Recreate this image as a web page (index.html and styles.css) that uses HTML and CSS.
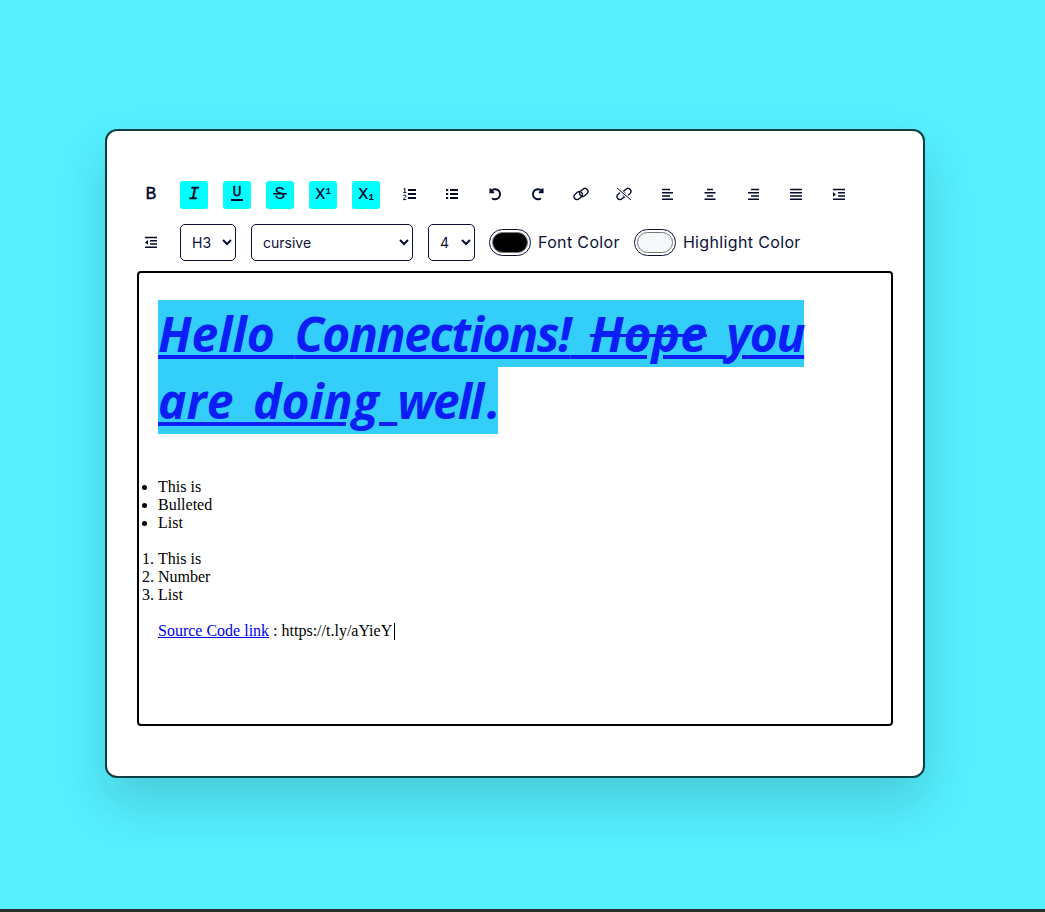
FILE: index.html
```html
<!DOCTYPE html>
<html lang="en">

<head>
  <meta charset="UTF-8" />
  <meta name="viewport" content="width=device-width, initial-scale=1.0" />
  <title>Rich Text Editor</title>
  <link rel="stylesheet" href="styles.css">
</head>

<body>
  <main class="page">
    <div class="container">
      <div class="options">
        <button class="option-button"><span class="glyph-b">B</span></button>
        <button class="option-button active"><span class="glyph-i">I</span></button>
        <button class="option-button active"><span class="glyph-u">U</span></button>
        <button class="option-button active"><span class="glyph-s">S</span></button>
        <button class="option-button active"><span class="glyph-x">X<sup>1</sup></span></button>
        <button class="option-button active"><span class="glyph-x">X<sub>1</sub></span></button>

        <button class="option-button">
          <svg class="icon" viewBox="0 0 14 14"><path class="line" d="M6 3H14M6 7H14M6 11H14" /><path class="thin" d="M1.6 2.2 2.8 1.4V5.6M1.4 5.6H4.2M1.4 8.8C1.8 7.6 4 7.8 4 9.1 4 10.3 1.5 11 1.4 12.6H4.3" /></svg>
        </button>
        <button class="option-button">
          <svg class="icon" viewBox="0 0 14 14"><path class="line" d="M5 3H13M5 7H13M5 11H13" /><path class="solid" d="M1 2H3.2V4H1ZM1 6H3.2V8H1ZM1 10H3.2V12H1Z" /></svg>
        </button>
        <button class="option-button">
          <svg class="icon" viewBox="0 0 14 14"><path class="heavy" d="M2.4 1.4V5.2H6.2M2.6 5A5 5 0 1 1 4 11.2" /></svg>
        </button>
        <button class="option-button">
          <svg class="icon" viewBox="0 0 14 14"><path class="heavy" d="M11.6 1.4V5.2H7.8M11.4 5A5 5 0 1 0 10 11.2" /></svg>
        </button>
        <button class="option-button">
          <svg class="icon wide" viewBox="0 0 16 14"><g class="chain"><rect x="0.7" y="5.6" width="9" height="6" rx="3" transform="rotate(-40 5.2 8.6)" /><rect x="6.3" y="2.400" width="9" height="6" rx="3" transform="rotate(-40 10.8 5.400)" /></g></svg>
        </button>
        <button class="option-button">
          <svg class="icon wide" viewBox="0 0 16 14"><g class="chain"><rect x="0.7" y="5.6" width="9" height="6" rx="3" transform="rotate(-40 5.2 8.6)" /><rect x="6.3" y="2.400" width="9" height="6" rx="3" transform="rotate(-40 10.8 5.400)" /></g><path class="halo" d="M1 1 15 13" /><path class="thin" d="M1 1 15 13" /></svg>
        </button>
        <button class="option-button">
          <svg class="icon" viewBox="0 0 14 14"><path class="bar" d="M2 2.500H10M2 5.800H13M2 9H10M2 12.200H13" /></svg>
        </button>
        <button class="option-button">
          <svg class="icon" viewBox="0 0 14 14"><path class="bar" d="M4 2.500H10M1.500 5.800H12.500M4 9H10M1.500 12.200H12.500" /></svg>
        </button>
        <button class="option-button">
          <svg class="icon" viewBox="0 0 14 14"><path class="bar" d="M5 2.500H13M2 5.800H13M5 9H13M2 12.200H13" /></svg>
        </button>
        <button class="option-button">
          <svg class="icon" viewBox="0 0 14 14"><path class="bar" d="M1 2.500H13M1 5.800H13M1 9H13M1 12.200H13" /></svg>
        </button>
        <button class="option-button">
          <svg class="icon" viewBox="0 0 14 14"><path class="bar" d="M1 2.500H13M6 5.800H13M6 9H13M1 12.200H13" /><path class="solid" d="M1 5V9.800L4 7.400Z" /></svg>
        </button>
        <button class="option-button">
          <svg class="icon" viewBox="0 0 14 14"><path class="bar" d="M1 2.500H13M6 5.800H13M6 9H13M1 12.200H13" /><path class="solid" d="M4 5V9.800L1 7.400Z" /></svg>
        </button>

        <select class="adv-option heading-select">
          <option>H3</option>
        </select>
        <select class="adv-option font-select">
          <option>cursive</option>
        </select>
        <select class="adv-option size-select">
          <option>4</option>
        </select>

        <div class="input-wrapper">
          <input type="color" class="color-input" value="#000000" id="foreColor" />
          <label for="foreColor">Font Color</label>
        </div>
        <div class="input-wrapper">
          <input type="color" class="color-input" value="#f5f9fa" id="backColor" />
          <label for="backColor">Highlight Color</label>
        </div>
      </div>

      <div class="text-input" contenteditable="true">
        <h3 class="title"><span class="mark"><u>Hello <span class="tight">Connections!</span> <s>Hope</s> <span class="tight">you</span> are <span class="wide-gap">doing </span></u><span class="tail">well .</span></span></h3>
        <ul class="doc-list">
          <li>This is</li>
          <li>Bulleted</li>
          <li>List</li>
        </ul>
        <ol class="doc-list">
          <li>This is</li>
          <li>Number</li>
          <li>List</li>
        </ol>
        <p class="doc-line"><a href="#">Source Code link</a> : https://t.ly/aYieY<span class="caret"></span></p>
      </div>
    </div>
  </main>
  <div class="taskbar-edge"></div>
</body>

</html>
```

FILE: styles.css
```css
* {
  box-sizing: border-box;
}

body {
  margin: 0;
  height: 100vh;
  overflow: hidden;
  display: flex;
  flex-direction: column;
  background-color: #55efff;
  font-family: Inter, "Open Sans", sans-serif;
}

.page {
  flex: 1;
  padding: 129px 0 0 105px;
}

.taskbar-edge {
  height: 3px;
  background-color: #2a2d2e;
}

.container {
  width: 820px;
  height: 649px;
  padding: 50px 30px;
  background-color: #fff;
  border: 2px solid #0b3f42;
  border-radius: 12px;
  box-shadow: 0 25px 50px rgba(0, 0, 0, 0.15);
}

.options {
  display: flex;
  flex-wrap: wrap;
  align-items: center;
  gap: 15px;
  margin-bottom: 10px;
}

.option-button {
  width: 28px;
  height: 28px;
  padding: 0;
  display: grid;
  place-items: center;
  background-color: #fff;
  color: #020929;
  border: none;
  border-radius: 3px;
  cursor: pointer;
}

.option-button.active {
  background-color: #00ffff;
}

.icon {
  width: 14px;
  height: 14px;
  margin-bottom: 2px;
}

.icon.wide {
  width: 16px;
}

.line,
.thin,
.bar,
.heavy,
.halo,
.chain {
  fill: none;
  stroke: #020929;
  stroke-width: 2;
}

.bar {
  stroke-width: 1.5;
}

.chain {
  stroke-width: 1.3;
}

.thin {
  stroke-width: 1;
}

.heavy {
  stroke-width: 1.9;
}

.halo {
  stroke: #fff;
  stroke-width: 3;
}

.solid {
  fill: #020929;
}

.glyph-b,
.glyph-i,
.glyph-s {
  font-family: "Liberation Mono", monospace;
  font-size: 18px;
  line-height: 14px;
  margin-bottom: 2px;
  -webkit-text-stroke: 0.4px #020929;
}

.glyph-i {
  font-style: italic;
}

.glyph-u {
  font-family: "Liberation Mono", monospace;
  font-size: 15px;
  line-height: 9px;
  margin-bottom: 2px;
  padding: 0 1px 2px;
  border-bottom: 2px solid #020929;
  -webkit-text-stroke: 0.4px #020929;
}

.glyph-s {
  padding: 0 2px;
  background: linear-gradient(#020929, #020929) center / 100% 1.5px no-repeat;
  -webkit-text-stroke: 0;
}

.glyph-x {
  font-family: Inter, sans-serif;
  font-size: 15px;
  font-weight: 500;
  line-height: 14px;
  margin-bottom: 2px;
}

.glyph-x sup,
.glyph-x sub {
  font-family: "Liberation Mono", monospace;
  font-size: 9px;
  font-weight: bold;
  line-height: 0;
}

.glyph-x sup {
  vertical-align: 5px;
}

.glyph-x sub {
  vertical-align: -1px;
}

.adv-option {
  height: 37px;
  padding: 0 6px 1px 7px;
  font-family: Inter, sans-serif;
  font-size: 14px;
  color: #0a1035;
  background-color: #fff;
  border: 1px solid #0a1035;
  border-radius: 5px;
}

.heading-select {
  width: 56px;
}

.font-select {
  width: 162px;
}

.size-select {
  width: 47px;
}

.input-wrapper {
  display: flex;
  align-items: center;
  gap: 7px;
  margin-left: -1px;
  color: #0a1035;
  font-size: 16px;
  letter-spacing: 0.35px;
}

.input-wrapper label {
  margin-bottom: 1px;
}

.color-input {
  width: 42px;
  height: 27px;
  padding: 0;
  background-color: #fff;
  border: 1px solid #0a1035;
  border-radius: 14px;
}

.color-input::-webkit-color-swatch-wrapper {
  padding: 2px;
}

.color-input::-webkit-color-swatch {
  border: 1px solid #777;
  border-radius: 11px;
}

.text-input {
  height: 455px;
  padding: 19px;
  color: #000;
  font-family: "Liberation Serif", serif;
  font-size: 16px;
  line-height: 18px;
  border: 2px solid #000;
  border-radius: 4px;
  outline: none;
}

.title {
  margin: 8px 0 44px;
  font-family: "Open Sans", sans-serif;
  font-size: 48px;
  font-style: italic;
  font-weight: bold;
  line-height: 67px;
  word-spacing: 7px;
  color: #0a1ef5;
}

.title u {
  text-decoration-thickness: 4px;
  text-underline-offset: 3px;
}

.title s {
  text-decoration-thickness: 3px;
}

.mark {
  background-color: #33cffa;
  padding: 1px 0;
}

.tight {
  letter-spacing: -1.4px;
}

.wide-gap {
  word-spacing: 6px;
}

.tail {
  letter-spacing: -2px;
  word-spacing: -6px;
}

.doc-list {
  margin: 18px 0;
  padding: 0;
}

.doc-line {
  margin: 18px 0 0;
}

.caret {
  display: inline-block;
  width: 1px;
  height: 17px;
  margin-left: 2px;
  vertical-align: -4px;
  background-color: #000;
}
```
